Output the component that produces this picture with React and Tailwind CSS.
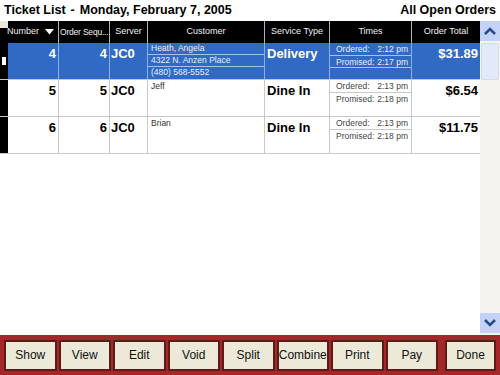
import React from "react";

const cols = "grid-cols-[8px_51px_51px_38px_117px_65px_82px_68px]";

const rows = [
  { num: 4, seq: 4, server: "JC0", cust: ["Heath, Angela", "4322 N. Anzen Place", "(480) 568-5552"], type: "Delivery", ord: "2:12 pm", prom: "2:17 pm", total: "$31.89", sel: true },
  { num: 5, seq: 5, server: "JC0", cust: ["Jeff"], type: "Dine In", ord: "2:13 pm", prom: "2:18 pm", total: "$6.54" },
  { num: 6, seq: 6, server: "JC0", cust: ["Brian"], type: "Dine In", ord: "2:13 pm", prom: "2:18 pm", total: "$11.75" },
];

function Row({ r }) {
  const sel = r.sel;
  const txt = sel ? "text-white" : "text-black";
  const vline = sel ? "border-[#8eaee6]" : "border-[#c8c8c8]";
  const sub = sel ? "border-[#a9c1ec]" : "border-[#c8c8c8]";
  const small = sel ? "text-[#e8eefa]" : "text-[#444]";
  const big = "text-[13px] font-bold leading-[16px] pt-[3px]";
  return (
    <div className={`grid ${cols} h-[37px] border-b border-[#c8c8c8] ${sel ? "bg-[#316ac5]" : "bg-white"} ${txt}`}>
      <div className="bg-black flex items-center justify-center">
        {sel && <div className="w-[4px] h-[8px] bg-white" />}
      </div>
      <div className={`border-r ${vline} text-right pr-[2px] ${big}`}>{r.num}</div>
      <div className={`border-r ${vline} text-right pr-[2px] ${big}`}>{r.seq}</div>
      <div className={`border-r ${vline} pl-[1px] ${big}`}>{r.server}</div>
      <div className={`border-r ${vline} flex flex-col`}>
        {sel ? (
          r.cust.map((c, i) => (
            <div key={i} className={`h-[12px] ${i < 2 ? `border-b ${sub}` : ""} pl-[3px] text-[8.5px] leading-[11px] whitespace-nowrap ${small}`}>{c}</div>
          ))
        ) : (
          <div className="pl-[3px] text-[8.5px] leading-[11px] pt-[1px] text-[#333]">{r.cust[0]}</div>
        )}
      </div>
      <div className={`border-r ${vline} pl-[2px] ${big}`}>{r.type}</div>
      <div className={`border-r ${vline} flex flex-col pt-[1px]`}>
        <div className={`h-[12px] border-b ${sub} flex justify-between pl-[6px] pr-[3px] text-[8.5px] leading-[11px] whitespace-nowrap ${small}`}>
          <span>Ordered:</span><span>{r.ord}</span>
        </div>
        <div className={`h-[12px] ${sel ? `border-b ${sub}` : ""} flex justify-between pl-[6px] pr-[3px] text-[8.5px] leading-[12px] whitespace-nowrap ${small}`}>
          <span>Promised:</span><span>{r.prom}</span>
        </div>
      </div>
      <div className={`text-right pr-[2px] ${big}`}>{r.total}</div>
    </div>
  );
}

function Chevron({ down }) {
  return (
    <svg width="14" height="10" viewBox="0 0 14 10">
      <path d={down ? "M2 2 L7 7 L12 2" : "M2 8 L7 3 L12 8"} fill="none" stroke="#2b4a8a" strokeWidth="2.6" strokeLinejoin="miter" />
    </svg>
  );
}

const buttons = ["Show", "View", "Edit", "Void", "Split", "Combine", "Print", "Pay"];

export default function App() {
  return (
    <div className="w-[500px] h-[375px] bg-white flex flex-col overflow-hidden" style={{ fontFamily: '"Liberation Sans", Arial, sans-serif' }}>
      <div className="h-[21px] flex items-center justify-between pl-[4px] pr-[4px] text-[12.5px] font-bold text-black">
        <span className="whitespace-nowrap">Ticket List<span className="mx-[5px]">-</span>Monday, February 7, 2005</span>
        <span>All Open Orders</span>
      </div>
      <div className="flex flex-1 min-h-0">
        <div className="w-[480px] flex flex-col">
          <div className={`grid ${cols} h-[22px] bg-black text-[#f0f0f0] text-[9px]`}>
            <div className="flex flex-col"><div className="h-[7px] bg-[#ece9d8]" /></div>
            <div className="border-r border-[#b0b0b0] flex items-center justify-end pr-[4px] gap-[6px]">
              <span>Number</span>
              <svg className="shrink-0" width="9" height="6" viewBox="0 0 9 6"><path d="M0 0 H9 L4.5 5.5 Z" fill="white" /></svg>
            </div>
            <div className="border-r border-[#b0b0b0] flex items-center pl-[1px] whitespace-nowrap overflow-hidden text-[8.5px] tracking-[-0.2px]">Order Sequ...</div>
            <div className="border-r border-[#b0b0b0] flex items-center justify-center">Server</div>
            <div className="border-r border-[#b0b0b0] flex items-center justify-center">Customer</div>
            <div className="border-r border-[#b0b0b0] flex items-center justify-center">Service Type</div>
            <div className="border-r border-[#b0b0b0] flex items-center justify-center">Times</div>
            <div className="flex items-center justify-center">Order Total</div>
          </div>
          {rows.map((r) => <Row key={r.num} r={r} />)}
        </div>
        <div className="w-[20px] bg-[#f4f3ee] flex flex-col pb-[2px]">
          <div className="h-[20px] bg-[#c2d3f7] flex items-center justify-center"><Chevron /></div>
          <div className="h-[37px] mt-[2px] mx-[1px] bg-[#e2e9f8] border border-[#d0dcf4] rounded-[2px]" />
          <div className="flex-1" />
          <div className="h-[20px] bg-[#c2d3f7] flex items-center justify-center"><Chevron down /></div>
        </div>
      </div>
      <div className="h-[40px] bg-[#a4282a] flex items-center pl-[4px] pr-[4px]">
        <div className="flex gap-[2px]">
          {buttons.map((b) => (
            <div key={b} className="w-[52.5px] h-[31px] bg-[#ece9d8] border-2 border-[#5e1a16] flex items-center justify-center text-[12px] text-[#111]">{b}</div>
          ))}
        </div>
        <div className="ml-auto w-[51px] h-[31px] bg-[#ece9d8] border-2 border-[#5e1a16] flex items-center justify-center text-[12px] text-[#111]">Done</div>
      </div>
    </div>
  );
}
